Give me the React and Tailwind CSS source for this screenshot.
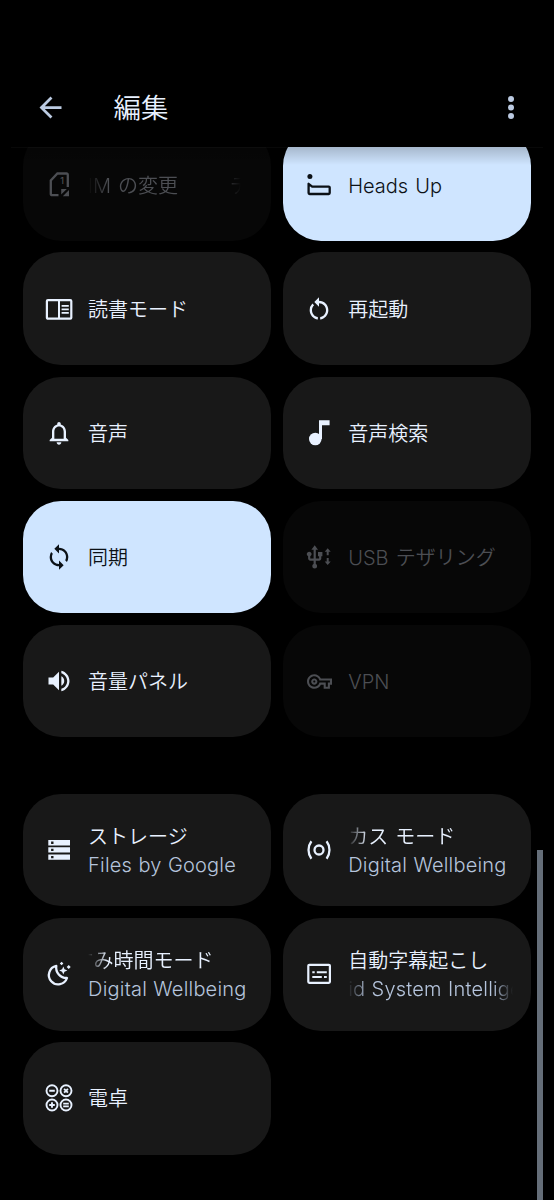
import clsx from 'clsx';
import {
  MdArrowBack,
  MdNotificationsNone,
  MdOutlineVpnKey,
  MdRestartAlt,
  MdSync,
  MdVolumeUp,
} from 'react-icons/md';

function Icon({ children }) {
  return (
    <svg viewBox="0 0 28 28" className="size-7" fill="none" stroke="currentColor" strokeWidth="2.3">
      {children}
    </svg>
  );
}

const SimIcon = () => (
  <Icon>
    <path d="M13.5 24.2H7A1.2 1.2 0 0 1 5.8 23V9.4L12.4 2.5H21.6A1.2 1.2 0 0 1 22.8 3.7V16" />
    <path d="M24 19v6.2h-6.2zM16.2 18h5.6l-5.6 5.6z" fill="currentColor" stroke="none" />
    <text x="15.2" y="13" fontSize="9" fontWeight="500" fill="currentColor" stroke="none">
      1
    </text>
  </Icon>
);

const HeadsUpIcon = () => (
  <Icon>
    <circle cx="4.9" cy="5.6" r="2.5" fill="currentColor" stroke="none" />
    <path d="M3.6 12.8V22a1 1 0 0 0 1 1H23.7a1 1 0 0 0 1-1V16.6a1 1 0 0 0-1-1H7.2z" strokeLinejoin="round" />
  </Icon>
);

const ReaderIcon = () => (
  <Icon>
    <rect x="1.9" y="5.1" width="24.4" height="18.6" rx="1" strokeWidth="2.2" />
    <path d="M14 5v19" strokeWidth="2" />
    <path d="M16.6 10.8h7.2M16.6 14.3h7.2M16.6 17.8h7.2" strokeWidth="1.7" />
  </Icon>
);

const NoteIcon = () => (
  <Icon>
    <g fill="currentColor" stroke="none">
      <circle cx="10.3" cy="20" r="6.3" />
      <path d="M14 1.2H24.6V6.3H17V20H14z" />
    </g>
  </Icon>
);

const UsbIcon = () => (
  <Icon>
    <g fill="currentColor" stroke="none">
      <path
        transform="translate(-3.5 1.2) scale(1.1)"
        d="M15 7v4h1v2h-3V5h2l-3-4-3 4h2v8H8v-2.07c.7-.37 1.2-1.08 1.2-1.93 0-1.21-.99-2.2-2.2-2.2S4.8 7.79 4.8 9c0 .85.5 1.56 1.2 1.93V13c0 1.11.89 2 2 2h3v3.05c-.71.37-1.2 1.1-1.2 1.95a2.2 2.2 0 0 0 4.4 0c0-.85-.49-1.58-1.2-1.95V15h3c1.11 0 2-.89 2-2v-2h1V7z"
      />
      <path d="M22.7 5.2l3 3.6h-2v3.4h-2V8.8h-2zM22.7 22l3-3.6h-2V15h-2v3.4h-2z" />
    </g>
  </Icon>
);

const StorageIcon = () => (
  <Icon>
    <path
      d="M3.3 4H25V9.4H3.3zM6.1 5.5V7.9H8.5V5.5zM3.3 11.2H25V16.6H3.3zM6.1 12.7V15.1H8.5V12.7zM3.3 18.4H25V23.8H3.3zM6.1 19.9V22.3H8.5V19.9z"
      fill="currentColor"
      fillRule="evenodd"
      stroke="none"
    />
  </Icon>
);

const FocusIcon = () => (
  <Icon>
    <circle cx="14" cy="14" r="4.5" />
    <path d="M6.4 5.3A14.6 14.6 0 0 0 6.4 22.7M21.6 5.3A14.6 14.6 0 0 1 21.6 22.7" />
  </Icon>
);

const BedtimeIcon = () => (
  <Icon>
    <path d="M11.3 5.9A9.3 9.3 0 1 0 22 18A10.4 10.4 0 0 1 11.3 5.9z" strokeLinejoin="round" />
    <g fill="currentColor" stroke="none">
      <path d="M18.3 6.4l1.2 2.9 2.9 1.2-2.9 1.2-1.2 2.9-1.2-2.9-2.9-1.2 2.9-1.2z" />
      <path d="M16.6 1.7l1.8 1.8-1.8 1.8-1.8-1.8zM23.7 4.9l2 2-2 2-2-2z" />
    </g>
  </Icon>
);

const CaptionIcon = () => (
  <Icon>
    <rect x="3.3" y="4.8" width="21.6" height="18" rx="1" strokeWidth="2.2" />
    <path d="M7.3 12.3h2.4M11.8 12.3h10M7.3 16.9h9.5M19 16.9h2.8" strokeWidth="2" />
  </Icon>
);

const CalculatorIcon = () => (
  <Icon>
    <g strokeWidth="1.9">
      <circle cx="7" cy="6.7" r="5.5" />
      <circle cx="21" cy="6.7" r="5.5" />
      <circle cx="7" cy="21" r="5.5" />
      <circle cx="21" cy="21" r="5.5" />
      <path d="M4.2 6.7h5.6M19.1 4.8l3.8 3.8M22.9 4.8l-3.8 3.8M4.2 21h5.6M7 18.2v5.6M18.2 19.6h5.6M18.2 22.4h5.6" />
    </g>
  </Icon>
);

const tiles = [
  {
    icon: <SimIcon />,
    title: 'SIM の変更',
    next: 'デ',
    state: 'disabled',
    fade: 'both',
    shift: '-ml-[13px]',
  },
  { icon: <HeadsUpIcon />, title: 'Heads Up', state: 'on' },
  { icon: <ReaderIcon />, title: '読書モード' },
  { icon: <MdRestartAlt className="size-7" />, title: '再起動' },
  { icon: <MdNotificationsNone className="size-7" />, title: '音声' },
  { icon: <NoteIcon />, title: '音声検索' },
  { icon: <MdSync className="size-7" />, title: '同期', state: 'on' },
  { icon: <UsbIcon />, title: 'USB テザリング', state: 'disabled' },
  { icon: <MdVolumeUp className="size-7" />, title: '音量パネル' },
  { icon: <MdOutlineVpnKey className="size-[25px]" />, title: 'VPN', state: 'disabled' },
];

const appTiles = [
  { icon: <StorageIcon />, title: 'ストレージ', subtitle: 'Files by Google' },
  {
    icon: <FocusIcon />,
    title: 'フォーカス モード',
    subtitle: 'Digital Wellbeing',
    fade: 'left',
    shift: '-ml-[60px]',
  },
  {
    icon: <BedtimeIcon />,
    title: 'おやすみ時間モード',
    subtitle: 'Digital Wellbeing',
    fade: 'left',
    shift: '-ml-[54.5px]',
  },
  {
    icon: <CaptionIcon />,
    title: '自動字幕起こし',
    subtitle: 'Android System Intelligence',
    subFade: 'both',
    subShift: '-ml-[57px]',
  },
  { icon: <CalculatorIcon />, title: '電卓' },
];

// Scrolling label, faded at the edges it runs past
function Marquee({ text, fade, shift, next, className }) {
  return (
    <div
      className={clsx(
        'overflow-hidden whitespace-nowrap',
        fade === 'left' && '[mask-image:linear-gradient(to_right,transparent,black_20px)]',
        fade === 'both' &&
          '[mask-image:linear-gradient(to_right,transparent,black_20px,black_calc(100%_-_20px),transparent)]',
        next && 'mr-3',
        className
      )}
    >
      <div className={clsx('flex gap-[52px]', shift)}>
        <span>{text}</span>
        {next && <span>{next}</span>}
      </div>
    </div>
  );
}

function Tile({ icon, title, subtitle, state = 'off', fade, shift, next, subFade, subShift }) {
  return (
    <div
      className={clsx(
        'flex h-[112.7px] items-center rounded-[38px] pr-[18px] pl-[22.5px]',
        state === 'on' && 'bg-[#cfe5ff] text-[#0c1116]',
        state === 'off' && 'bg-[#181818] text-[#e8f1ff]',
        state === 'disabled' && 'bg-[#070707] text-[#4c4e53]'
      )}
    >
      <div className="flex size-7 shrink-0 items-center justify-center">{icon}</div>
      <div className="ml-[15px] min-w-0 flex-1 pt-0.5 text-[20px] leading-7">
        <Marquee text={title} fade={fade} shift={shift} next={next} className="[word-spacing:1.5px]" />
        {subtitle && (
          <Marquee
            text={subtitle}
            fade={subFade}
            shift={subShift}
            className="tracking-[0.2px] text-[#b5c4dc] [word-spacing:0.5px]"
          />
        )}
      </div>
    </div>
  );
}

function TileGrid({ items }) {
  return (
    <div className="grid grid-cols-2 gap-[11.4px]">
      {items.map((tile) => (
        <Tile key={tile.title} {...tile} />
      ))}
    </div>
  );
}

export default function App() {
  return (
    <div
      lang="ja"
      className="relative flex h-[1200px] w-[554px] flex-col overflow-hidden bg-black font-['Inter','Noto_Sans_CJK_JP',sans-serif] font-[350]"
    >
      <header className="flex h-[147px] shrink-0 items-end px-[34px] pb-[23px]">
        <MdArrowBack className="size-[33px] text-[#bccbe2]" />
        <h1 className="ml-[46.5px] flex-1 text-[27.5px] leading-[31px] text-[#e8f1ff]">編集</h1>
        <svg viewBox="0 0 8 33" className="mr-[5px] h-[33px] w-2 fill-[#bccbe2]">
          <circle cx="4" cy="8" r="3" />
          <circle cx="4" cy="16.5" r="3" />
          <circle cx="4" cy="25" r="3" />
        </svg>
      </header>

      <main className="relative min-h-0 flex-1 overflow-hidden px-[22.6px]">
        <div className="-mt-[18.6px]">
          <TileGrid items={tiles} />
        </div>
        <div className="mt-[56.4px]">
          <TileGrid items={appTiles} />
        </div>

        {/* Header shadow over the scrolled list */}
        <div className="absolute inset-x-[11px] top-0 h-px bg-white/4" />
        <div className="absolute inset-x-[11px] top-0 h-[18px] bg-linear-to-b from-black/20 to-transparent" />
        {/* Scrollbar */}
        <div className="absolute top-[703px] right-[11px] bottom-0 w-1.5 bg-[#656e79]" />
      </main>
    </div>
  );
}
